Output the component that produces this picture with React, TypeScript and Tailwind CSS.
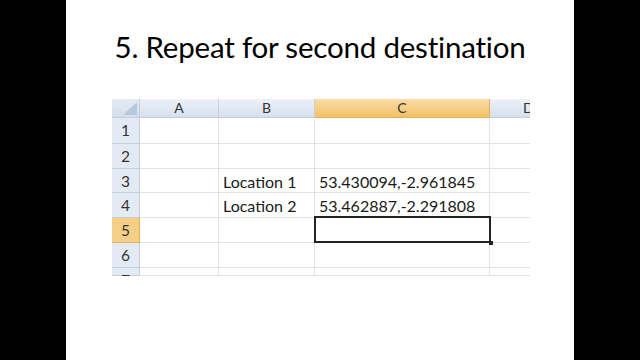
const cols = ["A", "B", "C", "D"];
const colWidths = ["w-[79px]", "w-[96px]", "w-[175px]", "w-[40px]"];

const rows: { n: number; b?: string; c?: string; h: string }[] = [
  { n: 1, h: "h-[26px]" },
  { n: 2, h: "h-[25px]" },
  { n: 3, b: "Location 1", c: "53.430094,-2.961845", h: "h-[24px]" },
  { n: 4, b: "Location 2", c: "53.462887,-2.291808", h: "h-[25px]" },
  { n: 5, h: "h-[25px]" },
  { n: 6, h: "h-[25px]" },
  { n: 7, h: "h-[8px]" },
];

function Corner() {
  return (
    <div className="w-[28px] h-[19px] bg-gradient-to-b from-[#e6ecf4] to-[#d3deec] border-r border-b border-[#c3cfde] relative">
      <svg className="absolute right-[2px] bottom-[2px]" width="14" height="13" viewBox="0 0 14 13">
        <polygon points="14,0 14,13 0,13" fill="#b8c8dc" />
      </svg>
    </div>
  );
}

export default function App() {
  return (
    <div className="w-[640px] h-[360px] bg-black flex justify-center" style={{ fontFamily: "Lato, 'Open Sans', sans-serif" }}>
      <div className="w-[508px] h-full bg-white flex flex-col">
        <h1 className="mt-[29px] h-[35px] text-center text-[29.5px] leading-[35px] text-black tracking-[-0.2px]">
          5. Repeat for second destination
        </h1>

        <div className="mt-[35px] ml-[46px] flex flex-col text-[#333]">
          {/* column headers */}
          <div className="flex">
            <Corner />
            {cols.map((c, i) => (
              <div
                key={c}
                className={`${colWidths[i]} h-[19px] flex items-center border-r border-b text-[14px] leading-none overflow-hidden ${
                  c === "C"
                    ? "bg-gradient-to-b from-[#f9dca6] to-[#f2c163] border-[#e2b45a] justify-center"
                    : c === "D"
                    ? "bg-gradient-to-b from-[#edf1f7] to-[#d6e0ec] border-[#c3cfde] border-r-0 pl-[33px]"
                    : "bg-gradient-to-b from-[#edf1f7] to-[#d6e0ec] border-[#c3cfde] justify-center"
                }`}
              >
                {c}
              </div>
            ))}
          </div>

          {rows.map((r) => (
            <div key={r.n} className={`flex ${r.h} ${r.n === 7 ? "overflow-hidden" : ""}`}>
              <div
                className={`w-[28px] shrink-0 flex justify-center pt-[3px] text-[15.5px] leading-[18px] border-r border-b ${
                  r.n === 5
                    ? "bg-[#f6cf86] border-[#e2b45a]"
                    : "bg-[#e3eaf4] border-[#c3cfde]"
                }`}
              >
                {r.n}
              </div>
              <div className="w-[79px] shrink-0 border-r border-b border-[#e3e3e3]" />
              <div className="w-[96px] shrink-0 border-r border-b border-[#e3e3e3] pl-[4px] pt-[4px] text-[16px] leading-[18px] text-[#1a1a1a] whitespace-nowrap">
                {r.b}
              </div>
              <div
                className={`w-[175px] shrink-0 border-b border-r border-[#e3e3e3] pl-[4px] pt-[4px] text-[16px] leading-[18px] text-[#1a1a1a] whitespace-nowrap ${
                  r.n === 5 ? "relative" : ""
                }`}
              >
                {r.c}
                {r.n === 5 && (
                  <div className="absolute z-10 left-[-1px] top-[-2px] w-[177px] h-[27px] border-2 border-[#222]">
                    <div className="absolute right-[-4px] bottom-[-4px] w-[4px] h-[4px] bg-[#222]" />
                  </div>
                )}
              </div>
              <div className="w-[40px] shrink-0 border-b border-[#e3e3e3]" />
            </div>
          ))}
        </div>
      </div>
    </div>
  );
}
